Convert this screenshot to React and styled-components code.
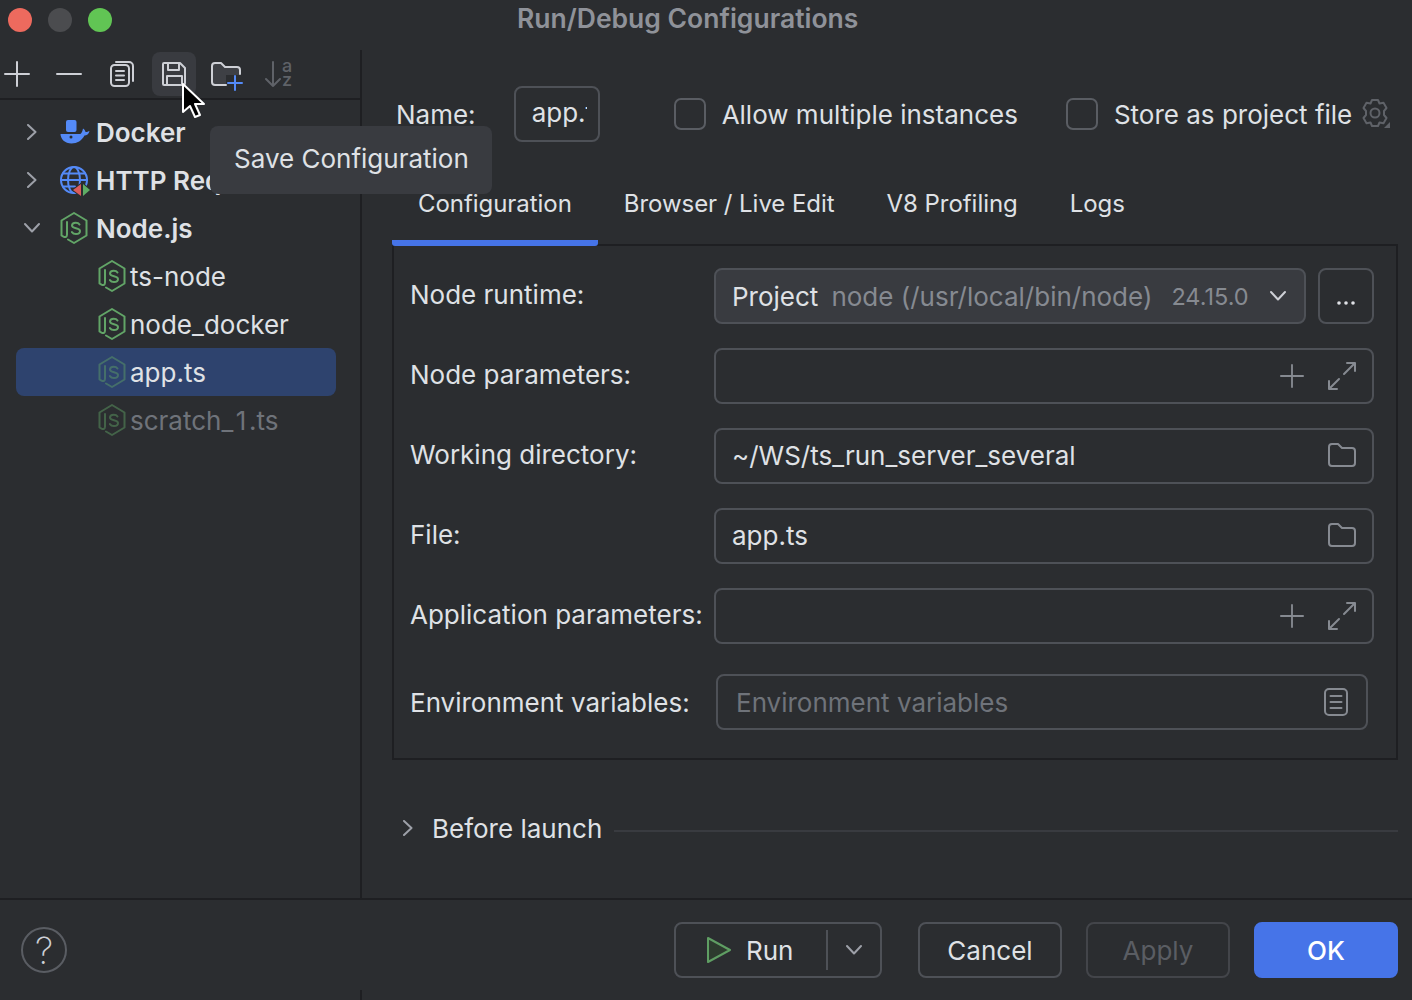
import React from 'react'
import styled, { createGlobalStyle } from 'styled-components'

const GlobalStyle = createGlobalStyle`
	html, body {
		margin: 0;
		padding: 0;
		background: #2b2d30;
	}
	* {
		box-sizing: border-box;
	}
`

const Window = styled.div`
	position: relative;
	width: 1412px;
	height: 1000px;
	overflow: hidden;
	display: flex;
	flex-direction: column;
	background: #2b2d30;
	color: #dfe1e5;
	font-family: Inter, "Liberation Sans", sans-serif;
	font-size: 26px;
`

const TitleBar = styled.div`
	height: 50px;
	flex: none;
	display: flex;
	align-items: flex-start;
	padding: 8px 0 0 8px;
`

const Light = styled.span`
	width: 24px;
	height: 24px;
	border-radius: 50%;
	margin-right: 16px;
	background: ${props => props.color};
`

const Title = styled.div`
	margin-left: 389px;
	margin-top: -5px;
	line-height: 30px;
	font-size: 26.5px;
	font-weight: 600;
	color: #8f9299;
`

const Body = styled.div`
	flex: 1;
	display: flex;
	min-height: 0;
`

const Sidebar = styled.div`
	width: 362px;
	flex: none;
	border-right: 2px solid #1e1f22;
	display: flex;
	flex-direction: column;
`

const Toolbar = styled.div`
	height: 50px;
	flex: none;
	display: flex;
	gap: 8px;
	padding: 2px 0 0;
	margin-left: -5px;
	border-bottom: 2px solid #1e1f22;
`

const ToolButton = styled.div`
	width: 44px;
	height: 44px;
	border-radius: 8px;
	display: flex;
	align-items: center;
	justify-content: center;
	margin-left: ${props => props.$shift || 0}px;
	padding: ${props => props.$pad || '0'};
	background: ${props => (props.$hover ? '#393b40' : 'transparent')};
`

const Tree = styled.div`
	padding: 8px 24px 0 16px;
	display: flex;
	flex-direction: column;
`

const TreeRow = styled.div`
	height: 48px;
	display: flex;
	align-items: center;
	border-radius: 8px;
	white-space: nowrap;
	padding-left: ${props => (props.$child ? '82px' : '4px')};
	background: ${props => (props.$selected ? '#2e436e' : 'transparent')};
	color: ${props => (props.$dim ? '#6f737a' : '#dfe1e5')};
	font-weight: ${props => (props.$bold ? 600 : 400)};
`

const WideDigit = styled.span`
	margin: 0 2.5px;
`

const Arrow = styled.span`
	width: 40px;
	flex: none;
	display: flex;
	align-items: center;
	padding-left: 4px;
`

const Glyph = styled.svg`
	flex: none;
	margin-left: ${props => props.$ml || 0}px;
	margin-right: ${props => props.$mr || 0}px;
	margin-top: ${props => props.$mt || 0}px;
	opacity: ${props => props.$opacity || 1};
`

const SortLetter = styled.text`
	font-family: Inter, "Liberation Sans", sans-serif;
	font-size: 18px;
	font-weight: 500;
	fill: #5f6268;
`

const Main = styled.div`
	flex: 1;
	min-width: 0;
	padding: 36px 14px 0 30px;
	display: flex;
	flex-direction: column;
`

const NameRow = styled.div`
	display: flex;
	align-items: center;
	height: 56px;
	padding-left: 4px;
`

const NameBox = styled.div`
	width: 86px;
	height: 56px;
	margin-left: 38px;
	margin-right: 74px;
	padding: 0 0 3px 16px;
	border: 2px solid #4e5157;
	border-radius: 8px;
	display: flex;
	align-items: center;
	overflow: hidden;
	white-space: nowrap;
`

const NameClip = styled.span`
	display: block;
	width: 55px;
	overflow: hidden;
`

const Check = styled.span`
	width: 32px;
	height: 32px;
	flex: none;
	border: 2px solid #5a5d63;
	border-radius: 7px;
	margin-right: 16px;
`

const CheckLabel = styled.span`
	margin-right: ${props => props.$gap || 0}px;
	white-space: nowrap;
`

const Tabs = styled.div`
	position: relative;
	display: flex;
	height: 86px;
	margin-top: 18px;
	margin-bottom: -2px;
`

const Tab = styled.div`
	padding: 28px 26px 0;
	height: 86px;
	line-height: 32px;
	font-size: 24px;
	letter-spacing: -0.05px;
	border-bottom: 6px solid ${props => (props.$active ? '#4674e8' : 'transparent')};
	border-radius: 0 0 3px 3px;
`

const Panel = styled.div`
	height: 516px;
	border: 2px solid #1e1f22;
	padding: 22px 22px 0 16px;
	display: flex;
	flex-direction: column;
	gap: 24px;
`

const FormRow = styled.div`
	display: flex;
	align-items: center;
	height: 56px;
	margin-top: ${props => props.$offset || 0}px;
`

const Label = styled.div`
	width: 304px;
	flex: none;
	white-space: nowrap;
	margin-top: ${props => props.$raise ?? -4}px;
`

const Field = styled.div`
	flex: 1;
	height: 56px;
	display: flex;
	align-items: center;
	padding: 0 16px;
	border: 2px solid #4e5157;
	border-radius: 8px;
	white-space: nowrap;
`

const FileField = styled(Field)`
	padding-bottom: 2px;
`

const ExpandBox = styled(Field)`
	padding-right: 15px;
	gap: 23px;
`

const EnvField = styled(Field)`
	margin: 0 6px 0 2px;
	padding: 0 18px;
	color: #6f737a;
`

const Select = styled(Field)`
	background: #393b40;
	padding-right: 18px;
`

const Spacer = styled.span`
	flex: 1;
`

const SelectMuted = styled.span`
	color: #868a91;
	margin-left: ${props => props.$gap}px;
	font-size: ${props => props.$size || 26}px;
`

const DotsButton = styled.div`
	width: 56px;
	height: 56px;
	flex: none;
	margin-left: 12px;
	border: 2px solid #4e5157;
	border-radius: 8px;
	display: flex;
	align-items: center;
	justify-content: center;
`

const BeforeLaunch = styled.div`
	display: flex;
	align-items: center;
	height: 40px;
	margin-top: 48px;
	padding-left: 8px;
`

const BeforeLabel = styled.span`
	margin-left: 16px;
	margin-right: 12px;
	white-space: nowrap;
`

const Rule = styled.div`
	flex: 1;
	height: 2px;
	margin-top: 6px;
	background: #393b40;
`

const Footer = styled.div`
	height: 102px;
	flex: none;
	border-top: 2px solid #1e1f22;
	display: flex;
	align-items: center;
	padding: 0 14px 0 21px;
`

const Help = styled.div`
	width: 46px;
	height: 46px;
	border: 2px solid #5a5d63;
	border-radius: 50%;
	display: flex;
	align-items: center;
	justify-content: center;
	font-size: 37px;
	font-weight: 200;
	color: #ced0d6;
	margin-right: auto;
`

const Button = styled.div`
	height: 56px;
	width: 144px;
	margin-left: ${props => props.$gap}px;
	border: 2px solid ${props => (props.$primary ? '#4674e8' : props.$disabled ? '#43454a' : '#4e5157')};
	border-radius: 8px;
	background: ${props => (props.$primary ? '#4674e8' : 'transparent')};
	color: ${props => (props.$primary ? '#fff' : props.$disabled ? '#5a5d63' : '#dfe1e5')};
	display: flex;
	align-items: center;
	justify-content: center;
	font-weight: ${props => (props.$primary ? 500 : 400)};
`

const RunButton = styled(Button)`
	width: 208px;
	justify-content: flex-start;
	padding-left: 30px;
`

const RunLabel = styled.span`
	margin-left: 14px;
	width: 80px;
`

const RunDivider = styled.span`
	width: 2px;
	height: 40px;
	background: #4e5157;
	margin-right: 18px;
`

const Tooltip = styled.div`
	position: absolute;
	left: 210px;
	top: 126px;
	width: 282px;
	height: 68px;
	padding: 0 0 4px 24px;
	display: flex;
	align-items: center;
	border-radius: 8px;
	background: #393b40;
	white-space: nowrap;
`

const Cursor = styled.svg`
	position: absolute;
	left: 180px;
	top: 82px;
`

const DividerTick = styled.span`
	position: absolute;
	left: 360px;
	top: 990px;
	width: 2px;
	height: 10px;
	background: #1e1f22;
`

const line = { fill: 'none', strokeLinecap: 'round', strokeLinejoin: 'round' }

const Plus = ({ size = 26, color = '#ced0d6' }) => (
	<Glyph width={size} height={size} viewBox="0 0 26 26" {...line} stroke={color} strokeWidth="2">
		<path d="M13 1v24M1 13h24" />
	</Glyph>
)

const Minus = () => (
	<Glyph width="26" height="26" viewBox="0 0 26 26" {...line} stroke="#ced0d6" strokeWidth="2">
		<path d="M1 13h24" />
	</Glyph>
)

const CopyIcon = () => (
	<Glyph width="24" height="28" viewBox="0 0 24 28" {...line} stroke="#ced0d6" strokeWidth="2">
		<rect x="1" y="5" width="18" height="21" rx="3.500" />
		<path d="M6 2h13a4 4 0 0 1 4 4v15" />
		<path d="M6 11h8M6 15.500h8M6 20h8" />
	</Glyph>
)

const SaveIcon = () => (
	<Glyph width="26" height="26" viewBox="0 0 26 26" {...line} stroke="#ced0d6" strokeWidth="2">
		<path d="M3 2h16l5 5v15a2 2 0 0 1-2 2H3a1 1 0 0 1-1-1V3a1 1 0 0 1 1-1z" />
		<path d="M7 2v7h11V2M6 24v-9h15v9" />
	</Glyph>
)

const NewFolderIcon = () => (
	<Glyph width="32" height="30" viewBox="0 0 32 30" {...line}>
		<path d="M1 5a3 3 0 0 1 3-3h6l4 4h12a3 3 0 0 1 3 3v5H15v10H4a3 3 0 0 1-3-3z" fill="#3e4045" />
		<path d="M15 24H4a3 3 0 0 1-3-3V5a3 3 0 0 1 3-3h6l4 4h12a3 3 0 0 1 3 3v4" stroke="#ced0d6" strokeWidth="2" />
		<path d="M24 15v14M17 22h14" stroke="#548af7" strokeWidth="2" />
	</Glyph>
)

const SortIcon = () => (
	<Glyph width="28" height="28" viewBox="0 0 28 28">
		<g {...line} stroke="#5f6268" strokeWidth="2">
			<path d="M8 2v24M1 19l7 7 7-7" />
		</g>
		<SortLetter x="17" y="12">a</SortLetter>
		<SortLetter x="17" y="26">z</SortLetter>
	</Glyph>
)

const Chevron = ({ dir = 'right', color = '#9da0a8', size = 16 }) => (
	<Glyph width={size} height={size} viewBox="0 0 16 16" {...line} stroke={color} strokeWidth="2">
		{dir === 'right' ? <path d="M4 1l7.500 7L4 15" /> : <path d="M1 4l7 7.500L15 4" />}
	</Glyph>
)

const DockerIcon = () => (
	<Glyph $mr={6} width="30" height="24" viewBox="0 0 30 24">
		<rect x="6" y="0" width="10.500" height="12" rx="2" fill="#548af7" />
		<path d="M.5 14H20c1 0 2.500-2 3-5.500 1.500 1 2.500 2.500 2.500 3.500 1.500 0 3-.5 4-1-.5 3-3 4.500-5 4.500-2.500 5-7.500 8-13 8C5 23.500.5 19 .5 14z" fill="#548af7" />
		<circle cx="11" cy="17" r="1.500" fill="#2b2d30" />
	</Glyph>
)

const GlobeIcon = () => (
	<Glyph $mr={6} width="30" height="32" viewBox="0 0 30 32">
		<g {...line} stroke="#548af7" strokeWidth="2">
			<circle cx="14" cy="16" r="13" />
			<ellipse cx="14" cy="16" rx="6" ry="13" />
			<path d="M1 16h26M3 9.500h22M3 22.500h12" />
		</g>
		<path d="M21 20v12l-8-6z" fill="#db5c5c" stroke="#2b2d30" strokeWidth="2" paintOrder="stroke" />
		<path d="M23 20v12l7-6z" fill="#5fad65" stroke="#2b2d30" strokeWidth="2" paintOrder="stroke" />
	</Glyph>
)

const JsIcon = ({ gap = 8, opacity, color = '#62a567' }) => (
	<Glyph $mr={gap} $opacity={opacity} width="28" height="32" viewBox="0 0 28 32" {...line} stroke={color} strokeWidth="2">
		<path d="M8 27.500L14 31l12.500-7.500v-15L14 1 1.500 8.500v15l2 1.200c2 1 3.500 0 3.500-2.200V10" />
		<path d="M19.500 12.500c-.8-1.300-2-1.800-3.800-1.800-2.200 0-3.700 1.100-3.700 2.800 0 3.700 8 1.800 8 5.600 0 1.900-1.700 3-4 3-1.700 0-3.200-.6-4.100-2" />
	</Glyph>
)

const GearIcon = () => (
	<Glyph $ml={9} width="30" height="32" viewBox="0 0 30 32">
		<g {...line} stroke="#5f6268" strokeWidth="2">
			<circle cx="14" cy="15" r="4.500" />
			<path d="M11 2h6l1.500 3.500 4-.8 3 5.300-2.500 3v4l2.500 3-3 5.300-4-.8L17 28h-6l-1.500-3.500-4 .8-3-5.300 2.500-3v-4l-2.500-3 3-5.300 4 .8z" />
		</g>
		<path d="M29 24v6h-6z" fill="#5f6268" />
	</Glyph>
)

const ExpandIcon = () => (
	<Glyph width="30" height="30" viewBox="0 0 30 30" {...line} stroke="#868a91" strokeWidth="2">
		<path d="M28 2L17 13M20 2h8v8M2 28l10-10M2 20v8h8" />
	</Glyph>
)

const FolderIcon = () => (
	<Glyph width="28" height="24" viewBox="0 0 28 24" {...line} stroke="#868a91" strokeWidth="2">
		<path d="M1 4a3 3 0 0 1 3-3h6l4 4h10a3 3 0 0 1 3 3v12a3 3 0 0 1-3 3H4a3 3 0 0 1-3-3z" />
	</Glyph>
)

const NoteIcon = () => (
	<Glyph width="24" height="28" viewBox="0 0 24 28" {...line} stroke="#868a91" strokeWidth="2">
		<rect x="1" y="1" width="22" height="26" rx="4" />
		<path d="M6.500 8h11M6.500 14h11M6.500 20h11" />
	</Glyph>
)

const PlayIcon = () => (
	<Glyph width="26" height="28" viewBox="0 0 26 28" strokeLinejoin="round" stroke="#5f9e63" strokeWidth="2" fill="#2d3b2e">
		<path d="M2 2l22 12L2 26z" />
	</Glyph>
)

const Dots = () => (
	<Glyph $mt={14} width="20" height="6" viewBox="0 0 20 6" fill="#dfe1e5">
		<circle cx="3" cy="3" r="1.800" />
		<circle cx="10" cy="3" r="1.800" />
		<circle cx="17" cy="3" r="1.800" />
	</Glyph>
)

const PointerIcon = () => (
	<Cursor width="28" height="40" viewBox="0 0 28 40">
		<path d="M3 2v28l7-6 5 11 5-2-5-11h9z" fill="#000" stroke="#fff" strokeWidth="2" strokeLinejoin="round" />
	</Cursor>
)

const ExpandField = () => (
	<ExpandBox>
		<Spacer />
		<Plus size={24} color="#868a91" />
		<ExpandIcon />
	</ExpandBox>
)

const FolderField = ({ value }) => (
	<FileField>
		{value}
		<Spacer />
		<FolderIcon />
	</FileField>
)

const App = () => (
	<Window>
		<GlobalStyle />
		<TitleBar>
			<Light color="#ed6a5e" />
			<Light color="#4b4c4f" />
			<Light color="#61c554" />
			<Title>Run/Debug Configurations</Title>
		</TitleBar>
		<Body>
			<Sidebar>
				<Toolbar>
					<ToolButton><Plus /></ToolButton>
					<ToolButton><Minus /></ToolButton>
					<ToolButton $shift={1}><CopyIcon /></ToolButton>
					<ToolButton $hover><SaveIcon /></ToolButton>
					<ToolButton $pad="4px 0 0 2px"><NewFolderIcon /></ToolButton>
					<ToolButton $pad="0 0 0 2px"><SortIcon /></ToolButton>
				</Toolbar>
				<Tree>
					<TreeRow $bold>
						<Arrow><Chevron /></Arrow>
						<DockerIcon />
						Docker
					</TreeRow>
					<TreeRow $bold>
						<Arrow><Chevron /></Arrow>
						<GlobeIcon />
						HTTP Request
					</TreeRow>
					<TreeRow $bold>
						<Arrow><Chevron dir="down" /></Arrow>
						<JsIcon />
						Node.js
					</TreeRow>
					<TreeRow $child><JsIcon gap={4} />ts-node</TreeRow>
					<TreeRow $child><JsIcon gap={4} />node_docker</TreeRow>
					<TreeRow $child $selected><JsIcon gap={4} opacity={0.45} />app.ts</TreeRow>
					<TreeRow $child $dim>
						<JsIcon gap={4} opacity={0.45} />
						<span>scratch_<WideDigit>1</WideDigit>.ts</span>
					</TreeRow>
				</Tree>
			</Sidebar>
			<Main>
				<NameRow>
					Name:
					<NameBox><NameClip>app.ts</NameClip></NameBox>
					<Check />
					<CheckLabel $gap={48}>Allow multiple instances</CheckLabel>
					<Check />
					<CheckLabel>Store as project file</CheckLabel>
					<GearIcon />
				</NameRow>
				<Tabs>
					<Tab $active>Configuration</Tab>
					<Tab>Browser / Live Edit</Tab>
					<Tab>V8 Profiling</Tab>
					<Tab>Logs</Tab>
				</Tabs>
				<Panel>
					<FormRow>
						<Label>Node runtime:</Label>
						<Select>
							Project
							<SelectMuted $gap={13}>node (/usr/local/bin/node)</SelectMuted>
							<SelectMuted $gap={19} $size={23.5}>24.15.0</SelectMuted>
							<Spacer />
							<Chevron dir="down" color="#ced0d6" />
						</Select>
						<DotsButton><Dots /></DotsButton>
					</FormRow>
					<FormRow>
						<Label>Node parameters:</Label>
						<ExpandField />
					</FormRow>
					<FormRow>
						<Label>Working directory:</Label>
						<FolderField value="~/WS/ts_run_server_several" />
					</FormRow>
					<FormRow>
						<Label>File:</Label>
						<FolderField value="app.ts" />
					</FormRow>
					<FormRow>
						<Label>Application parameters:</Label>
						<ExpandField />
					</FormRow>
					<FormRow $offset={6}>
						<Label $raise={0}>Environment variables:</Label>
						<EnvField>
							Environment variables
							<Spacer />
							<NoteIcon />
						</EnvField>
					</FormRow>
				</Panel>
				<BeforeLaunch>
					<Chevron />
					<BeforeLabel>Before launch</BeforeLabel>
					<Rule />
				</BeforeLaunch>
			</Main>
		</Body>
		<Footer>
			<Help>?</Help>
			<RunButton $gap={0}>
				<PlayIcon />
				<RunLabel>Run</RunLabel>
				<RunDivider />
				<Chevron dir="down" />
			</RunButton>
			<Button $gap={36}>Cancel</Button>
			<Button $gap={24} $disabled>Apply</Button>
			<Button $gap={24} $primary>OK</Button>
		</Footer>
		<Tooltip>Save Configuration</Tooltip>
		<PointerIcon />
		<DividerTick />
	</Window>
)

export default App
